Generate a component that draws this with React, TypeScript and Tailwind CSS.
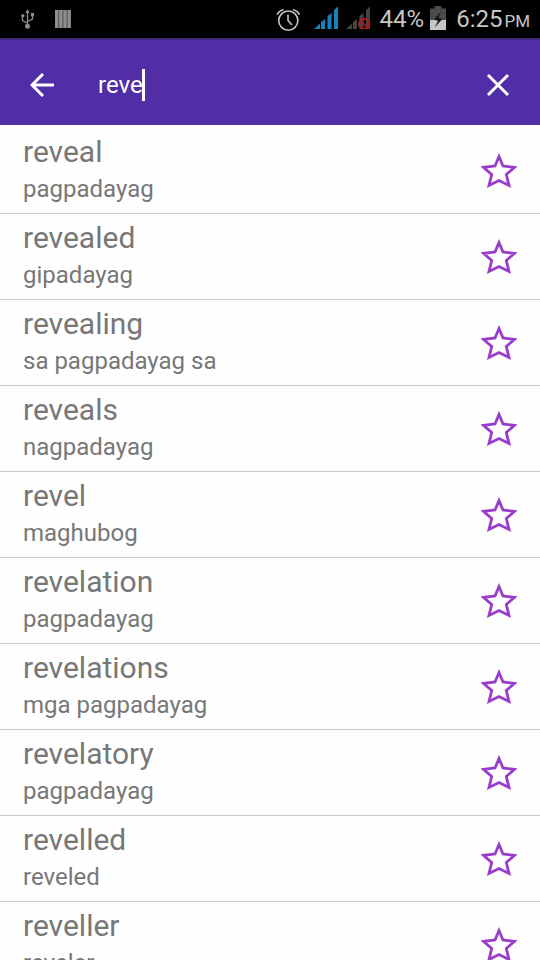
import React, { useState } from 'react';

type Entry = { word: string; meaning: string };

const entries: Entry[] = [
  { word: 'reveal', meaning: 'pagpadayag' },
  { word: 'revealed', meaning: 'gipadayag' },
  { word: 'revealing', meaning: 'sa pagpadayag sa' },
  { word: 'reveals', meaning: 'nagpadayag' },
  { word: 'revel', meaning: 'maghubog' },
  { word: 'revelation', meaning: 'pagpadayag' },
  { word: 'revelations', meaning: 'mga pagpadayag' },
  { word: 'revelatory', meaning: 'pagpadayag' },
  { word: 'revelled', meaning: 'reveled' },
  { word: 'reveller', meaning: 'reveler' },
];

const UsbIcon = () => (
  <svg className="w-4 h-5" viewBox="0 0 16 20" fill="none" stroke="#8b8b8b" strokeWidth="1.3" aria-hidden="true">
    <path d="M7.5 3v14M7.5 14 2.5 11.500V7M7.500 12.500 12.500 10V6.500" />
    <path d="M7.500 0 9.700 4H5.300z" fill="#8b8b8b" stroke="none" />
    <circle cx="7.500" cy="17.300" r="2.500" fill="#8b8b8b" stroke="none" />
    <circle cx="2.800" cy="6.800" r="1.700" fill="#8b8b8b" stroke="none" />
    <path d="M10.800 4h3.300v3.300h-3.300z" fill="#8b8b8b" stroke="none" />
  </svg>
);

const BarsIcon = () => (
  <svg className="w-4 h-5" viewBox="0 0 16 20" aria-hidden="true">
    <path d="M0 1h16v18H0z" fill="#4d4d4d" />
    <path d="M0 1h3.200v18H0zM4.200 1h3.200v18H4.200zM8.400 1h3.200v18H8.400zM12.600 1h3.200v18h-3.200z" fill="#8e8e8e" />
  </svg>
);

const AlarmIcon = () => (
  <svg className="w-6 h-6" viewBox="0 0 24 24" fill="none" stroke="#c4c4c4" strokeWidth="1.600" aria-hidden="true">
    <circle cx="12.300" cy="13.600" r="9.600" />
    <path d="M12 7.500v6l4 4.500M1 7.500Q3 4 7.500 2.500M23.500 7.500Q21.500 4 17 2.500" />
  </svg>
);

const SignalIcon = ({ color, blocked }: { color: string; blocked?: boolean }) => (
  <svg className="w-6 h-6" viewBox="0 0 24 24" aria-hidden="true">
    <path d="M0 24 6 18.500V24zM7 24v-7l4-3v10zM13.500 24V11l4-3v16zM20 24V5l4-3.500V24z" fill={color} />
    {blocked && (
      <g fill="none" stroke="#b3161c" strokeWidth="1.800">
        <circle cx="18" cy="19" r="5" />
        <path d="m15 15.500 6 7" />
      </g>
    )}
  </svg>
);

const BatteryIcon = () => (
  <svg className="w-4 h-6" viewBox="0 0 16 24" aria-hidden="true">
    <path d="M4.500 0h7v2.500H16V24H0V2.500h4.500z" fill="#4b4b4b" />
    <path d="M0 14h16v10H0z" fill="#c6c6c6" />
    <path d="M11 5.500 4 13.500l4 1.500-3.500 6.500L12.500 13l-4-1.500z" fill="#161616" />
  </svg>
);

const StarIcon = () => (
  <svg className="w-9 h-9" viewBox="0 0 36 36" fill="none" stroke="#9a3ccb" strokeWidth="2.800" aria-hidden="true">
    <path d="M18 3.500 22 13 33.500 14.300 25.300 21.500 28 32.500 18 27.500 8 32.500 10.700 21.500 2.500 14.300 14 13z" />
  </svg>
);

const StatusBar = () => (
  <div className="flex items-center h-[38px] shrink-0 pl-5 pr-2.5 bg-black text-[#c6c6c6]">
    <UsbIcon />
    <span className="ml-[19px]">
      <BarsIcon />
    </span>
    <div className="flex items-center ml-auto">
      <AlarmIcon />
      <span className="ml-3.5 mb-1">
        <SignalIcon color="#1583bf" />
      </span>
      <span className="ml-2 mb-1">
        <SignalIcon color="#434343" blocked />
      </span>
      <span className="ml-2.5 text-2xl">44%</span>
      <span className="ml-1.5 mb-0.5">
        <BatteryIcon />
      </span>
      <div className="flex items-baseline gap-0.5 ml-2.5">
        <span className="text-2xl">6:25</span>
        <span className="text-[17px]">PM</span>
      </div>
    </div>
  </div>
);

const SearchBar = () => {
  const [query, setQuery] = useState('reve');

  return (
    <header className="flex items-center h-[87px] shrink-0 pl-6 pr-6 pt-1 bg-[#512da8] border-t-2 border-[#40287c] text-white">
      <button type="button" aria-label="Back" className="flex items-center justify-center w-9 h-9">
        <svg className="w-6 h-6" viewBox="0 0 24 24" fill="none" stroke="currentColor" strokeWidth="3" aria-hidden="true">
          <path d="M24 12H2M13 1 2 12l11 11" />
        </svg>
      </button>
      <label className="flex items-center flex-1 min-w-0 ml-[38px]">
        <span className="sr-only">Search</span>
        <input
          type="text"
          value={query}
          onChange={(e) => setQuery(e.target.value)}
          className="field-sizing-content h-9 pr-0.5 text-2xl caret-transparent outline-none"
        />
        <span className="w-[3px] h-8 -ml-[3px] bg-white" />
      </label>
      <button type="button" aria-label="Clear" className="flex items-center justify-center w-9 h-9">
        <svg className="w-6 h-6" viewBox="0 0 24 24" fill="none" stroke="currentColor" strokeWidth="3" aria-hidden="true">
          <path d="m2 2 20 20M22 2 2 22" />
        </svg>
      </button>
    </header>
  );
};

const EntryRow = ({ word, meaning }: Entry) => (
  <li className="flex items-center justify-between h-[86px] px-[23px] border-b border-[#c8c8c8]">
    <div className="text-[#777777]">
      <p className="text-3xl leading-9">{word}</p>
      <p className="text-2xl leading-[38px]">{meaning}</p>
    </div>
    <button type="button" aria-label={`Add ${word} to favorites`}>
      <StarIcon />
    </button>
  </li>
);

export default function App() {
  return (
    <div className="flex flex-col h-screen overflow-hidden bg-[#fefefe] font-['Roboto',sans-serif]">
      <StatusBar />
      <SearchBar />
      <ul className="flex-1 min-h-0 pt-[3px] overflow-hidden">
        {entries.map((entry) => (
          <EntryRow key={entry.word} {...entry} />
        ))}
      </ul>
    </div>
  );
}
